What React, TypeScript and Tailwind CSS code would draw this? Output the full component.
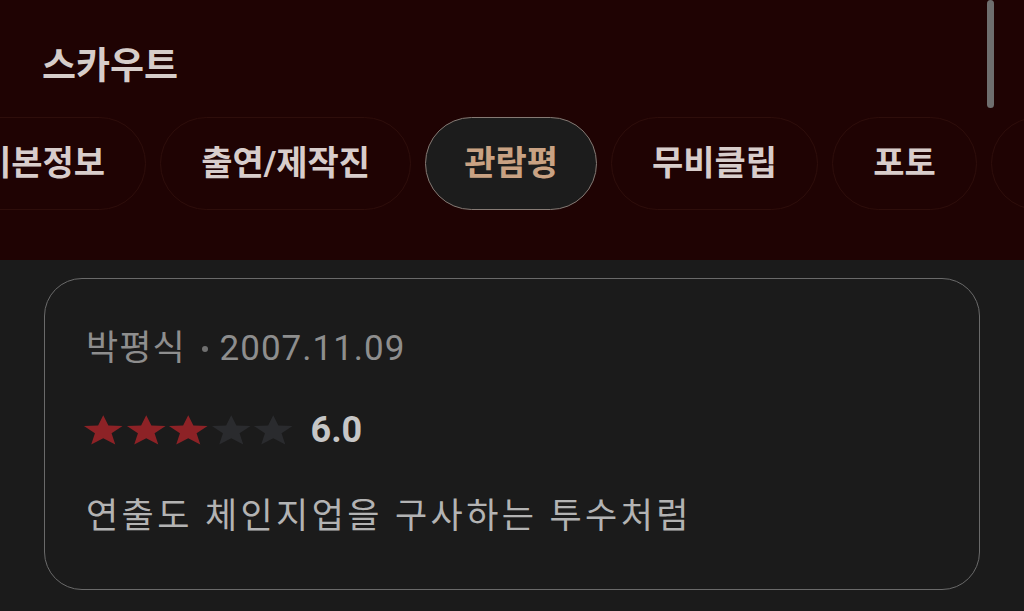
import React from "react";

// Movie detail: tab bar + one audience review card

const KR = "font-['Roboto','Noto_Sans_CJK_KR',sans-serif]";

const tabs = ["기본정보", "출연/제작진", "관람평", "무비클립", "포토", "영상"];
const ACTIVE = "관람평";

function Star({ filled }: { filled: boolean }) {
  return (
    <svg
      viewBox="0 0 24 24"
      preserveAspectRatio="none"
      className="w-[42.5px] h-[34px]"
      aria-hidden="true"
    >
      <path
        d="M12 1.5l2.9 7.3 8 .4-6.2 5.1 2.1 7.9L12 17.8l-6.8 4.4 2.1-7.9-6.2-5.1 8-.4z"
        fill={filled ? "#8d2226" : "#2a2b2e"}
      />
    </svg>
  );
}

export default function App() {
  const score = 6.0;
  const filled = Math.round(score / 2);

  return (
    <div className={`relative w-[1024px] h-[611px] overflow-hidden bg-[#1b1b1b] ${KR}`}>
      {/* Header */}
      <div className="h-[260px] bg-[#1f0303] flex flex-col">
        <h1 className="pl-[42px] pt-[44px] text-[37px] leading-[46px] font-bold text-[#d6cdca]">
          스카우트
        </h1>
        <div className="mt-[27px] overflow-hidden">
          <div className="flex gap-[14px] -ml-[61px] w-max">
            {tabs.map((t) => {
              const active = t === ACTIVE;
              return (
                <div
                  key={t}
                  className={
                    active
                      ? "h-[93px] px-[38px] flex items-center rounded-full bg-[#1c1c1c] border-[1.5px] border-[#857a74] text-[34px] font-bold text-[#c9a283]"
                      : "h-[93px] px-[40px] flex items-center rounded-full border border-[#2e0e0b] text-[34px] font-bold text-[#d8cdcb]"
                  }
                >
                  {t}
                </div>
              );
            })}
          </div>
        </div>
      </div>

      {/* Review card */}
      <div className="mx-[44px] mt-[18px] h-[312px] rounded-[38px] border-[1.5px] border-[#6a6a6a] pl-[41px] pt-[50px] flex flex-col">
        <div className="flex items-center text-[35px] leading-[40px] tracking-[1px] text-[#8e8e8e]">
          <span>박평식</span>
          <span className="ml-[16px] mr-[12px] w-[6px] h-[6px] rounded-full bg-[#707070]" />
          <span>2007.11.09</span>
        </div>
        <div className="mt-[41px] -ml-[4px] flex items-center">
          <div className="flex">
            {[0, 1, 2, 3, 4].map((i) => (
              <Star key={i} filled={i < filled} />
            ))}
          </div>
          <span className="ml-[16px] text-[36px] leading-[40px] font-bold text-[#c6c6c6]">
            {score.toFixed(1)}
          </span>
        </div>
        <p className="mt-[45px] text-[35px] leading-[44px] tracking-[3.4px] text-[#b3b3b3]">
          연출도 체인지업을 구사하는 투수처럼
        </p>
      </div>

      {/* Scrollbar thumb */}
      <div className="absolute left-[987px] top-0 w-[7px] h-[108px] rounded-full bg-[#6e6e6e]" />
    </div>
  );
}
